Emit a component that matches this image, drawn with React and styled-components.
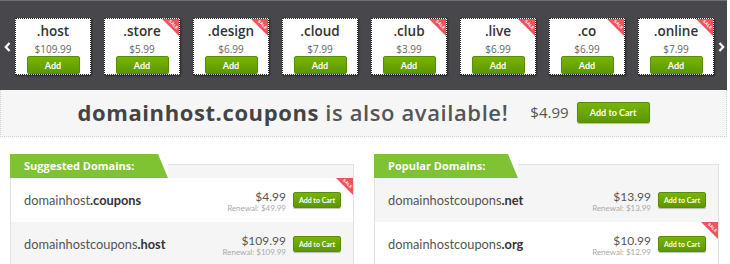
import React from "react";
import styled, { createGlobalStyle } from "styled-components";

const GlobalStyle = createGlobalStyle`
  html, body { margin: 0; padding: 0; background: #fff; }
  body { font-family: "Lato", "Open Sans", "Liberation Sans", sans-serif; }
`;

const Page = styled.div`
  width: 730px;
  height: 264px;
  overflow: hidden;
  background: #fff;
`;

const Carousel = styled.div`
  width: 727px;
  height: 90px;
  box-sizing: border-box;
  background: #48484c;
  border-top: 1px solid #707074;
  display: flex;
  align-items: flex-start;
  padding: 17px 0 0 4px;
`;

const Arrow = styled.div`
  width: 11px;
  height: 57px;
  display: flex;
  align-items: center;
  justify-content: ${(p) => (p.$right ? "flex-end" : "flex-start")};
  color: #fff;
  svg { display: block; }
`;

const Cards = styled.div`
  display: flex;
  gap: 13px;
`;

const Card = styled.div`
  position: relative;
  width: 76px;
  height: 57px;
  box-sizing: border-box;
  background: #fff;
  border: 1px dotted #2a2a2c;
  box-shadow: 1px 1px 2px rgba(0, 0, 0, 0.4);
  display: flex;
  flex-direction: column;
  align-items: center;
  padding-top: 2px;
`;

const CardName = styled.div`
  font-family: "Open Sans", sans-serif;
  font-size: 13.5px;
  font-weight: 600;
  line-height: 16px;
  color: #333;
  margin-top: 2px;
`;

const CardPrice = styled.div`
  font-family: "Open Sans", sans-serif;
  font-size: 10px;
  line-height: 14px;
  color: #666;
  margin-top: 3px;
`;

const GreenButton = styled.div`
  box-sizing: border-box;
  width: ${(p) => p.$w}px;
  height: ${(p) => p.$h}px;
  background: linear-gradient(#77b500, #5e9700);
  border: 1px solid #5a8c0a;
  border-radius: 2px;
  color: #fff;
  font-size: ${(p) => p.$fs}px;
  font-weight: 700;
  display: flex;
  align-items: center;
  justify-content: center;
  box-shadow: 0 1px 1px rgba(0, 0, 0, 0.25);
  flex: none;
`;

const Ribbon = styled.div`
  position: absolute;
  top: 0;
  right: 0;
  width: 0;
  height: 0;
  border-style: solid;
  border-width: 0 ${(p) => p.$size}px ${(p) => p.$size}px 0;
  border-color: transparent #f2525c transparent transparent;
  span {
    position: absolute;
    top: 3px;
    left: 6px;
    transform: rotate(45deg);
    font-size: 4px;
    line-height: 5px;
    font-weight: 700;
    color: #fff;
    letter-spacing: 0.2px;
    font-family: "Liberation Sans", sans-serif;
  }
`;

const Banner = styled.div`
  width: 727px;
  height: 47px;
  box-sizing: border-box;
  background: #f6f6f6;
  border: 1px dotted #cfd3c8;
  border-top: none;
  display: flex;
  align-items: center;
  justify-content: center;
  padding-bottom: 2px;
`;

const BannerText = styled.div`
  font-family: "Open Sans", sans-serif;
  font-size: 22px;
  color: #555;
  font-weight: 600;
  letter-spacing: 0.6px;
  b {
    color: #444;
    font-weight: 700;
  }
`;

const BannerPrice = styled.div`
  font-family: "Open Sans", sans-serif;
  font-size: 15px;
  color: #555;
  margin: 0 8px 0 22px;
`;

const Lower = styled.div`
  display: flex;
  gap: 20px;
  padding: 17px 0 0 10px;
`;

const Panel = styled.div`
  width: ${(p) => p.$w}px;
  display: flex;
  flex-direction: column;
`;

const PanelHead = styled.div`
  display: flex;
  height: 24px;
`;

const Tab = styled.div`
  width: ${(p) => p.$w}px;
  height: 24px;
  box-sizing: border-box;
  background: #7fc234;
  clip-path: polygon(0 0, calc(100% - 10px) 0, 100% 100%, 0 100%);
  color: #fff;
  font-family: "Open Sans", sans-serif;
  font-size: 11px;
  font-weight: 700;
  padding-left: 14px;
  line-height: 24px;
  flex: none;
`;

const HeadFill = styled.div`
  flex: 1;
  margin-top: 10px;
  background: #f5f5f5;
  border-top: 1px solid #e2e2e2;
  border-right: 1px solid #e2e2e2;
`;

const PanelBody = styled.div`
  border-left: 1px solid #e2e2e2;
  border-right: 1px solid #e2e2e2;
`;

const Row = styled.div`
  position: relative;
  height: 44px;
  box-sizing: border-box;
  background: ${(p) => (p.$sale ? "#fff" : "#f5f5f5")};
  display: flex;
  align-items: center;
  padding: 0 12px 0 13px;
`;

const DomainName = styled.div`
  flex: 1;
  font-size: 12.8px;
  color: #555;
  b {
    color: #333;
    font-weight: 700;
  }
`;

const PriceBlock = styled.div`
  text-align: right;
  margin-right: 7px;
  margin-top: 2px;
`;

const RowPrice = styled.div`
  font-size: 12px;
  line-height: 13px;
  color: #555;
`;

const Renewal = styled.div`
  font-size: 8px;
  line-height: 10px;
  color: #aaa;
`;

const Chevron = ({ dir }) => (
  <svg width="7" height="10" viewBox="0 0 7 10">
    <path
      d={dir === "left" ? "M5.5 1 L1.8 5 L5.5 9" : "M1.5 1 L5.2 5 L1.5 9"}
      fill="none"
      stroke="#fff"
      strokeWidth="2.2"
    />
  </svg>
);

const tlds = [
  { n: ".host", p: "$109.99" },
  { n: ".store", p: "$5.99", s: true },
  { n: ".design", p: "$6.99", s: true },
  { n: ".cloud", p: "$7.99" },
  { n: ".club", p: "$3.99", s: true },
  { n: ".live", p: "$6.99", s: true },
  { n: ".co", p: "$6.99", s: true },
  { n: ".online", p: "$7.99", s: true },
];

const suggested = [
  { a: "domainhost", b: ".coupons", p: "$4.99", r: "Renewal: $49.99", s: true },
  { a: "domainhostcoupons", b: ".host", p: "$109.99", r: "Renewal: $109.99" },
];

const popular = [
  { a: "domainhostcoupons", b: ".net", p: "$13.99", r: "Renewal: $13.99" },
  { a: "domainhostcoupons", b: ".org", p: "$10.99", r: "Renewal: $12.99", s: true },
];

const SaleRibbon = () => (
  <Ribbon $size={17}>
    <span>SALE</span>
  </Ribbon>
);

const DomainPanel = ({ title, tabW, w, rows }) => (
  <Panel $w={w}>
    <PanelHead>
      <Tab $w={tabW}>{title}</Tab>
      <HeadFill />
    </PanelHead>
    <PanelBody>
      {rows.map((r) => (
        <Row key={r.b} $sale={r.s}>
          <DomainName>
            {r.a}
            <b>{r.b}</b>
          </DomainName>
          <PriceBlock>
            <RowPrice>{r.p}</RowPrice>
            <Renewal>{r.r}</Renewal>
          </PriceBlock>
          <GreenButton $w={48} $h={16} $fs={7}>
            Add to Cart
          </GreenButton>
          {r.s && <SaleRibbon />}
        </Row>
      ))}
    </PanelBody>
  </Panel>
);

export default function App() {
  return (
    <Page>
      <GlobalStyle />
      <Carousel>
        <Arrow>
          <Chevron dir="left" />
        </Arrow>
        <Cards>
          {tlds.map((t) => (
            <Card key={t.n}>
              <CardName>{t.n}</CardName>
              <CardPrice>{t.p}</CardPrice>
              <GreenButton $w={53} $h={18} $fs={9}>
                Add
              </GreenButton>
              {t.s && <SaleRibbon />}
            </Card>
          ))}
        </Cards>
        <Arrow $right>
          <Chevron dir="right" />
        </Arrow>
      </Carousel>
      <Banner>
        <BannerText>
          <b>domainhost.coupons</b> is also available!
        </BannerText>
        <BannerPrice>$4.99</BannerPrice>
        <GreenButton $w={73} $h={21} $fs={9}>
          Add to Cart
        </GreenButton>
      </Banner>
      <Lower>
        <DomainPanel title="Suggested Domains:" tabW={158} w={344} rows={suggested} />
        <DomainPanel title="Popular Domains:" tabW={144} w={345} rows={popular} />
      </Lower>
    </Page>
  );
}
